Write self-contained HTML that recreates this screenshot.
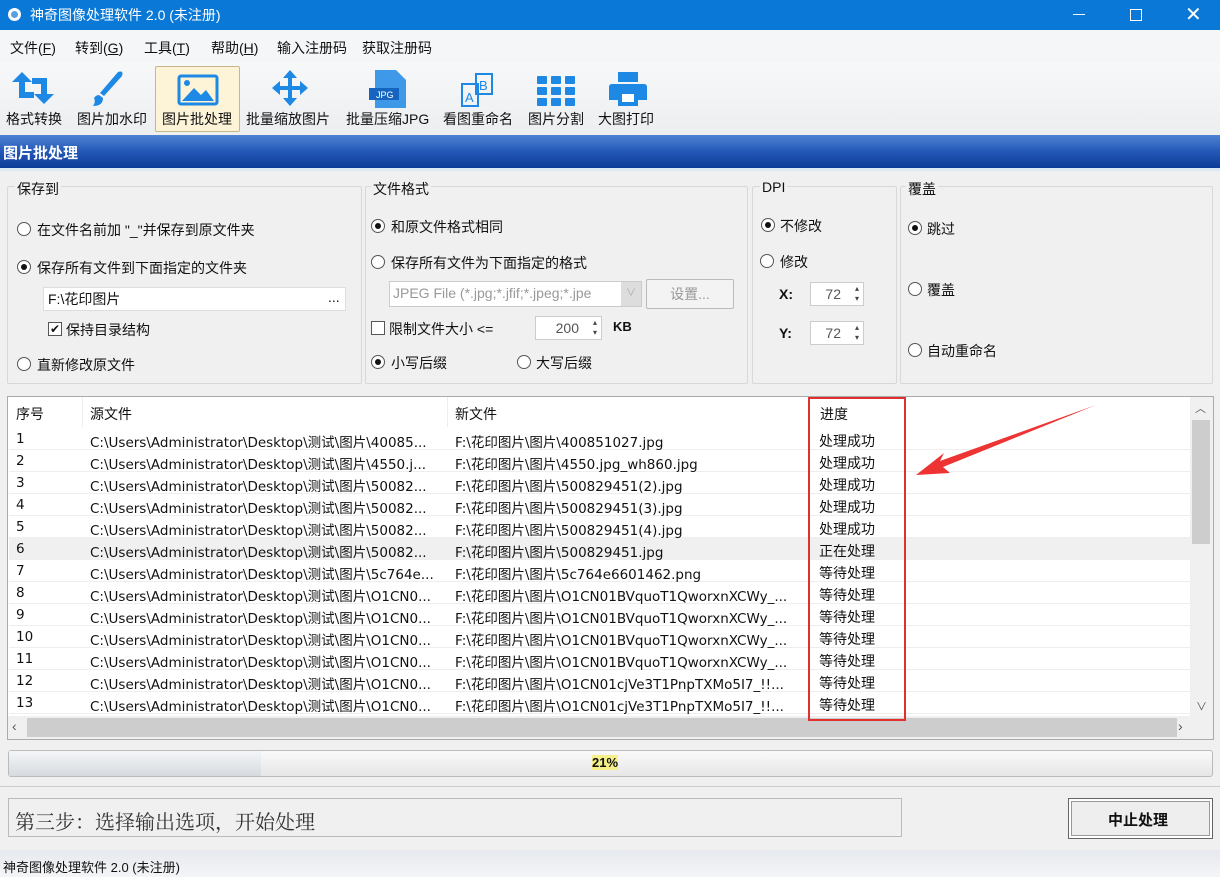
<!DOCTYPE html>
<html><head><meta charset="utf-8">
<style>
*{margin:0;padding:0;box-sizing:border-box}
body{width:1220px;height:877px;overflow:hidden;background:#f0f0f0;font-family:"Liberation Sans","Noto Sans CJK SC",sans-serif;font-size:14px;color:#111;position:relative}
.a{position:absolute;white-space:nowrap}
.rb{position:absolute;width:14px;height:14px;border:1px solid #555;border-radius:50%;background:#fff}
.rb.on::after{content:"";position:absolute;left:3px;top:3px;width:6px;height:6px;border-radius:50%;background:#111}
.grp{position:absolute;border:1px solid #d8d8d8;border-radius:2px}
.tb{position:absolute;top:66px;text-align:center;font-size:14px}
.row{position:absolute;left:9px;width:1181px;height:22px;border-bottom:1px solid #eee;font-family:"DejaVu Sans","Noto Sans CJK SC",sans-serif;font-size:13.5px}
.row span{position:absolute;top:3px}
.row span:last-child{font-family:"Liberation Sans","Noto Sans CJK SC",sans-serif;font-size:14px}
.spin{position:absolute;background:#fff;border:1px solid #ccc;height:24px;text-align:right;padding-right:22px;line-height:22px;color:#555}
.spin::after{content:"▴\A▾";white-space:pre;position:absolute;right:4px;top:1px;font-size:8px;line-height:10px;color:#444}
</style></head><body>
<!-- title -->
<div class="a" style="left:0;top:0;width:1220px;height:30px;background:#0a78d7"></div>
<div class="a" style="left:8px;top:8px;width:13px;height:13px;border-radius:50%;background:#fff"></div>
<div class="a" style="left:11px;top:11px;width:7px;height:7px;border-radius:50%;background:#5aa0e0"></div>
<div class="a" style="left:30px;top:5px;color:#fff;font-size:14px">神奇图像处理软件 2.0 (未注册)</div>
<div class="a" style="left:1073px;top:14px;width:12px;height:1px;background:#fff"></div>
<div class="a" style="left:1130px;top:9px;width:12px;height:12px;border:1px solid #fff"></div>
<div class="a" style="left:1185px;top:2px;color:#fff;font-size:20px;font-weight:300">✕</div>
<!-- menu -->
<div class="a" style="left:0;top:30px;width:1220px;height:32px;background:#f5f6f7"></div>
<div class="a" style="left:10px;top:38px;font-size:14px">文件(<u>F</u>)</div>
<div class="a" style="left:75px;top:38px">转到(<u>G</u>)</div>
<div class="a" style="left:144px;top:38px">工具(<u>T</u>)</div>
<div class="a" style="left:211px;top:38px">帮助(<u>H</u>)</div>
<div class="a" style="left:277px;top:38px">输入注册码</div>
<div class="a" style="left:362px;top:38px">获取注册码</div>
<!-- toolbar -->
<div class="a" style="left:0;top:62px;width:1220px;height:72px;background:linear-gradient(#f7f8f9,#eceef0)"></div>
<div class="a" style="left:155px;top:66px;width:85px;height:66px;background:#fdf4d8;border:1px solid #c8b888;border-radius:2px"></div>
<svg class="a" style="left:0;top:68px" width="660" height="40" viewBox="0 0 660 40">
<g fill="#1e88e5">
<path d="M22 4 L12 14 L19 14 L19 30 L34 30 L34 24 L25 24 L25 14 L32 14 Z"/>
<path d="M44 36 L54 26 L47 26 L47 10 L32 10 L32 16 L41 16 L41 26 L34 26 Z"/>
<path d="M118 4 Q124 2 122 8 L104 28 L100 25 Z M99 27 L103 30 Q103 38 93 38 Q96 34 94 30 Q96 27 99 27Z"/>
<rect x="179" y="8" width="38" height="28" rx="2" fill="none" stroke="#1e88e5" stroke-width="3"/>
<circle cx="187" cy="15" r="3"/><path d="M182 33 L194 20 L201 27 L206 22 L214 33Z"/>
<path d="M290 2 L297 10 L292 10 L292 18 L300 18 L300 13 L308 20 L300 27 L300 22 L292 22 L292 30 L297 30 L290 38 L283 30 L288 30 L288 22 L280 22 L280 27 L272 20 L280 13 L280 18 L288 18 L288 10 L283 10Z"/>
<path d="M375 2 L396 2 L406 12 L406 40 L375 40Z" opacity=".85"/><rect x="369" y="20" width="30" height="12" fill="#1565c0"/>
<text x="376" y="30" font-size="9" fill="#fff" font-family="Liberation Sans">JPG</text>
<rect x="462" y="16" width="16" height="22" fill="none" stroke="#1e88e5" stroke-width="2"/><rect x="476" y="6" width="16" height="20" fill="none" stroke="#1e88e5" stroke-width="2"/>
<text x="465" y="34" font-size="13" font-family="Liberation Sans">A</text><text x="479" y="22" font-size="13" font-family="Liberation Sans">B</text>
<rect x="537" y="8" width="10" height="8" rx="1"/><rect x="551" y="8" width="10" height="8" rx="1"/><rect x="565" y="8" width="10" height="8" rx="1"/>
<rect x="537" y="19" width="10" height="8" rx="1"/><rect x="551" y="19" width="10" height="8" rx="1"/><rect x="565" y="19" width="10" height="8" rx="1"/>
<rect x="537" y="30" width="10" height="8" rx="1"/><rect x="551" y="30" width="10" height="8" rx="1"/><rect x="565" y="30" width="10" height="8" rx="1"/>
<path d="M618 4 L638 4 L638 14 L618 14Z M612 16 L644 16 Q647 16 647 19 L647 32 L638 32 L638 38 L618 38 L618 32 L609 32 L609 19 Q609 16 612 16Z"/><rect x="622" y="26" width="12" height="8" fill="#fff"/>
</g></svg>
<div class="tb" style="left:6px;top:109px">格式转换</div>
<div class="tb" style="left:77px;top:109px">图片加水印</div>
<div class="tb" style="left:162px;top:109px">图片批处理</div>
<div class="tb" style="left:246px;top:109px">批量缩放图片</div>
<div class="tb" style="left:346px;top:109px">批量压缩JPG</div>
<div class="tb" style="left:443px;top:109px">看图重命名</div>
<div class="tb" style="left:528px;top:109px">图片分割</div>
<div class="tb" style="left:598px;top:109px">大图打印</div>
<!-- header -->
<div class="a" style="left:0;top:135px;width:1220px;height:33px;background:linear-gradient(#4e83d2,#2458b8 50%,#0c3a98)"></div>
<div class="a" style="left:3px;top:142px;color:#fff;font-weight:bold;font-size:15px">图片批处理</div>
<div class="a" style="left:0;top:168px;width:1220px;height:3px;background:#dde8f5"></div>
<!-- groups -->
<div class="grp" style="left:7px;top:186px;width:355px;height:198px"></div>
<div class="a" style="left:15px;top:179px;background:#f0f0f0;padding:0 2px">保存到</div>
<div class="rb" style="left:17px;top:222px"></div><div class="a" style="left:37px;top:220px">在文件名前加 "_"并保存到原文件夹</div>
<div class="rb on" style="left:17px;top:260px"></div><div class="a" style="left:37px;top:258px">保存所有文件到下面指定的文件夹</div>
<div class="a" style="left:43px;top:287px;width:303px;height:24px;background:#fff;border:1px solid #ddd"></div>
<div class="a" style="left:48px;top:289px">F:\花印图片</div><div class="a" style="left:328px;top:289px">...</div>
<div class="a" style="left:48px;top:322px;width:14px;height:14px;border:1px solid #555;background:#fff;font-size:12px;line-height:12px;text-align:center">✔</div>
<div class="a" style="left:66px;top:320px">保持目录结构</div>
<div class="rb" style="left:17px;top:357px"></div><div class="a" style="left:37px;top:355px">直新修改原文件</div>

<div class="grp" style="left:365px;top:186px;width:383px;height:198px"></div>
<div class="a" style="left:371px;top:179px;background:#f0f0f0;padding:0 2px">文件格式</div>
<div class="rb on" style="left:371px;top:219px"></div><div class="a" style="left:391px;top:217px">和原文件格式相同</div>
<div class="rb" style="left:371px;top:255px"></div><div class="a" style="left:391px;top:253px">保存所有文件为下面指定的格式</div>
<div class="a" style="left:389px;top:281px;width:253px;height:26px;background:#fff;border:1px solid #ccc;color:#999;padding:3px 0 0 3px;overflow:hidden">JPEG File (*.jpg;*.jfif;*.jpeg;*.jpe</div>
<div class="a" style="left:621px;top:282px;width:20px;height:24px;background:#ddd;color:#aaa;font-size:10px;text-align:center;line-height:24px">∨</div>
<div class="a" style="left:646px;top:279px;width:88px;height:30px;background:#f3f3f3;border:1px solid #bbb;border-radius:2px;color:#999;text-align:center;line-height:28px">设置...</div>
<div class="a" style="left:371px;top:321px;width:14px;height:14px;border:1px solid #555;background:#fff"></div>
<div class="a" style="left:389px;top:319px">限制文件大小 &lt;=</div>
<div class="spin" style="left:535px;top:316px;width:67px">200</div>
<div class="a" style="left:613px;top:319px;font-weight:bold;font-size:13px">KB</div>
<div class="rb on" style="left:371px;top:355px"></div><div class="a" style="left:391px;top:353px">小写后缀</div>
<div class="rb" style="left:517px;top:355px"></div><div class="a" style="left:536px;top:353px">大写后缀</div>

<div class="grp" style="left:752px;top:186px;width:145px;height:198px"></div>
<div class="a" style="left:760px;top:179px;background:#f0f0f0;padding:0 2px">DPI</div>
<div class="rb on" style="left:761px;top:218px"></div><div class="a" style="left:780px;top:216px">不修改</div>
<div class="rb" style="left:760px;top:254px"></div><div class="a" style="left:780px;top:252px">修改</div>
<div class="a" style="left:779px;top:286px;font-weight:bold">X:</div><div class="spin" style="left:810px;top:282px;width:54px">72</div>
<div class="a" style="left:779px;top:325px;font-weight:bold">Y:</div><div class="spin" style="left:810px;top:321px;width:54px">72</div>

<div class="grp" style="left:900px;top:186px;width:313px;height:198px"></div>
<div class="a" style="left:906px;top:179px;background:#f0f0f0;padding:0 2px">覆盖</div>
<div class="rb on" style="left:908px;top:221px"></div><div class="a" style="left:927px;top:219px">跳过</div>
<div class="rb" style="left:908px;top:282px"></div><div class="a" style="left:927px;top:280px">覆盖</div>
<div class="rb" style="left:908px;top:343px"></div><div class="a" style="left:927px;top:341px">自动重命名</div>

<!-- table -->
<div class="a" style="left:7px;top:396px;width:1207px;height:344px;background:#fff;border:1px solid #aaa"></div>
<div class="a" style="left:82px;top:397px;width:1px;height:30px;background:#eee"></div>
<div class="a" style="left:447px;top:397px;width:1px;height:30px;background:#eee"></div>
<div class="a" style="left:16px;top:404px">序号</div><div class="a" style="left:90px;top:404px">源文件</div><div class="a" style="left:455px;top:404px">新文件</div><div class="a" style="left:820px;top:404px">进度</div>
<div class="row" style="top:428px"><span style="left:7px">1</span><span style="left:81px">C:\Users\Administrator\Desktop\测试\图片\40085...</span><span style="left:446px">F:\花印图片\图片\400851027.jpg</span><span style="left:810px">处理成功</span></div>
<div class="row" style="top:450px"><span style="left:7px">2</span><span style="left:81px">C:\Users\Administrator\Desktop\测试\图片\4550.j...</span><span style="left:446px">F:\花印图片\图片\4550.jpg_wh860.jpg</span><span style="left:810px">处理成功</span></div>
<div class="row" style="top:472px"><span style="left:7px">3</span><span style="left:81px">C:\Users\Administrator\Desktop\测试\图片\50082...</span><span style="left:446px">F:\花印图片\图片\500829451(2).jpg</span><span style="left:810px">处理成功</span></div>
<div class="row" style="top:494px"><span style="left:7px">4</span><span style="left:81px">C:\Users\Administrator\Desktop\测试\图片\50082...</span><span style="left:446px">F:\花印图片\图片\500829451(3).jpg</span><span style="left:810px">处理成功</span></div>
<div class="row" style="top:516px"><span style="left:7px">5</span><span style="left:81px">C:\Users\Administrator\Desktop\测试\图片\50082...</span><span style="left:446px">F:\花印图片\图片\500829451(4).jpg</span><span style="left:810px">处理成功</span></div>
<div class="row" style="top:538px;background:#f0f0f0"><span style="left:7px">6</span><span style="left:81px">C:\Users\Administrator\Desktop\测试\图片\50082...</span><span style="left:446px">F:\花印图片\图片\500829451.jpg</span><span style="left:810px">正在处理</span></div>
<div class="row" style="top:560px"><span style="left:7px">7</span><span style="left:81px">C:\Users\Administrator\Desktop\测试\图片\5c764e...</span><span style="left:446px">F:\花印图片\图片\5c764e6601462.png</span><span style="left:810px">等待处理</span></div>
<div class="row" style="top:582px"><span style="left:7px">8</span><span style="left:81px">C:\Users\Administrator\Desktop\测试\图片\O1CN0...</span><span style="left:446px">F:\花印图片\图片\O1CN01BVquoT1QworxnXCWy_...</span><span style="left:810px">等待处理</span></div>
<div class="row" style="top:604px"><span style="left:7px">9</span><span style="left:81px">C:\Users\Administrator\Desktop\测试\图片\O1CN0...</span><span style="left:446px">F:\花印图片\图片\O1CN01BVquoT1QworxnXCWy_...</span><span style="left:810px">等待处理</span></div>
<div class="row" style="top:626px"><span style="left:7px">10</span><span style="left:81px">C:\Users\Administrator\Desktop\测试\图片\O1CN0...</span><span style="left:446px">F:\花印图片\图片\O1CN01BVquoT1QworxnXCWy_...</span><span style="left:810px">等待处理</span></div>
<div class="row" style="top:648px"><span style="left:7px">11</span><span style="left:81px">C:\Users\Administrator\Desktop\测试\图片\O1CN0...</span><span style="left:446px">F:\花印图片\图片\O1CN01BVquoT1QworxnXCWy_...</span><span style="left:810px">等待处理</span></div>
<div class="row" style="top:670px"><span style="left:7px">12</span><span style="left:81px">C:\Users\Administrator\Desktop\测试\图片\O1CN0...</span><span style="left:446px">F:\花印图片\图片\O1CN01cjVe3T1PnpTXMo5I7_!!...</span><span style="left:810px">等待处理</span></div>
<div class="row" style="top:692px"><span style="left:7px">13</span><span style="left:81px">C:\Users\Administrator\Desktop\测试\图片\O1CN0...</span><span style="left:446px">F:\花印图片\图片\O1CN01cjVe3T1PnpTXMo5I7_!!...</span><span style="left:810px">等待处理</span></div>
<!-- scrollbars -->
<div class="a" style="left:1190px;top:397px;width:23px;height:319px;background:#f0f0f0"></div>
<div class="a" style="left:1192px;top:420px;width:18px;height:124px;background:#cdcdcd"></div>
<div class="a" style="left:1195px;top:400px;font-size:11px;color:#555">︿</div>
<div class="a" style="left:1196px;top:698px;font-size:11px;color:#555">∨</div>
<div class="a" style="left:8px;top:716px;width:1205px;height:23px;background:#f0f0f0"></div>
<div class="a" style="left:27px;top:718px;width:1150px;height:19px;background:#cdcdcd"></div>
<div class="a" style="left:12px;top:718px;color:#555">‹</div>
<div class="a" style="left:1178px;top:718px;color:#555">›</div>
<!-- red box + arrow -->
<div class="a" style="left:808px;top:397px;width:98px;height:324px;border:2px solid #e03030"></div>
<svg class="a" style="left:900px;top:395px" width="210" height="90"><path d="M196 10 L40 66 L44 58 L16 80 L50 78 L43 72 Z" fill="#ee3333"/></svg>
<!-- progress -->
<div class="a" style="left:8px;top:750px;width:1205px;height:27px;border:1px solid #bbb;border-radius:3px;background:linear-gradient(#fafafa,#e6e6e6)"></div>
<div class="a" style="left:9px;top:751px;width:252px;height:25px;background:linear-gradient(#f4f6f8,#d6dadf)"></div>
<div class="a" style="left:592px;top:755px;font-weight:bold;font-size:13px;background:#f5f08a">21%</div>
<div class="a" style="left:0;top:786px;width:1220px;height:1px;background:#ccc"></div>
<div class="a" style="left:8px;top:798px;width:894px;height:39px;border:1px solid #bbb;background:#f0f0f0"></div>
<div class="a" style="left:15px;top:806px;font-family:'Liberation Serif','Noto Serif CJK SC',serif;font-size:20px;color:#333">第三步：选择输出选项，开始处理</div>
<div class="a" style="left:1068px;top:798px;width:145px;height:41px;border:1px solid #666;background:#eee;box-shadow:inset 0 0 0 2px #fff,inset 0 0 0 3px #999"></div>
<div class="a" style="left:1108px;top:809px;font-weight:bold;font-size:15px">中止处理</div>
<!-- status -->
<div class="a" style="left:0;top:850px;width:1220px;height:27px;background:linear-gradient(#e6e9ee,#f4f5f7)"></div>
<div class="a" style="left:3px;top:857px;font-size:13px">神奇图像处理软件 2.0 (未注册)</div>
</body></html>
